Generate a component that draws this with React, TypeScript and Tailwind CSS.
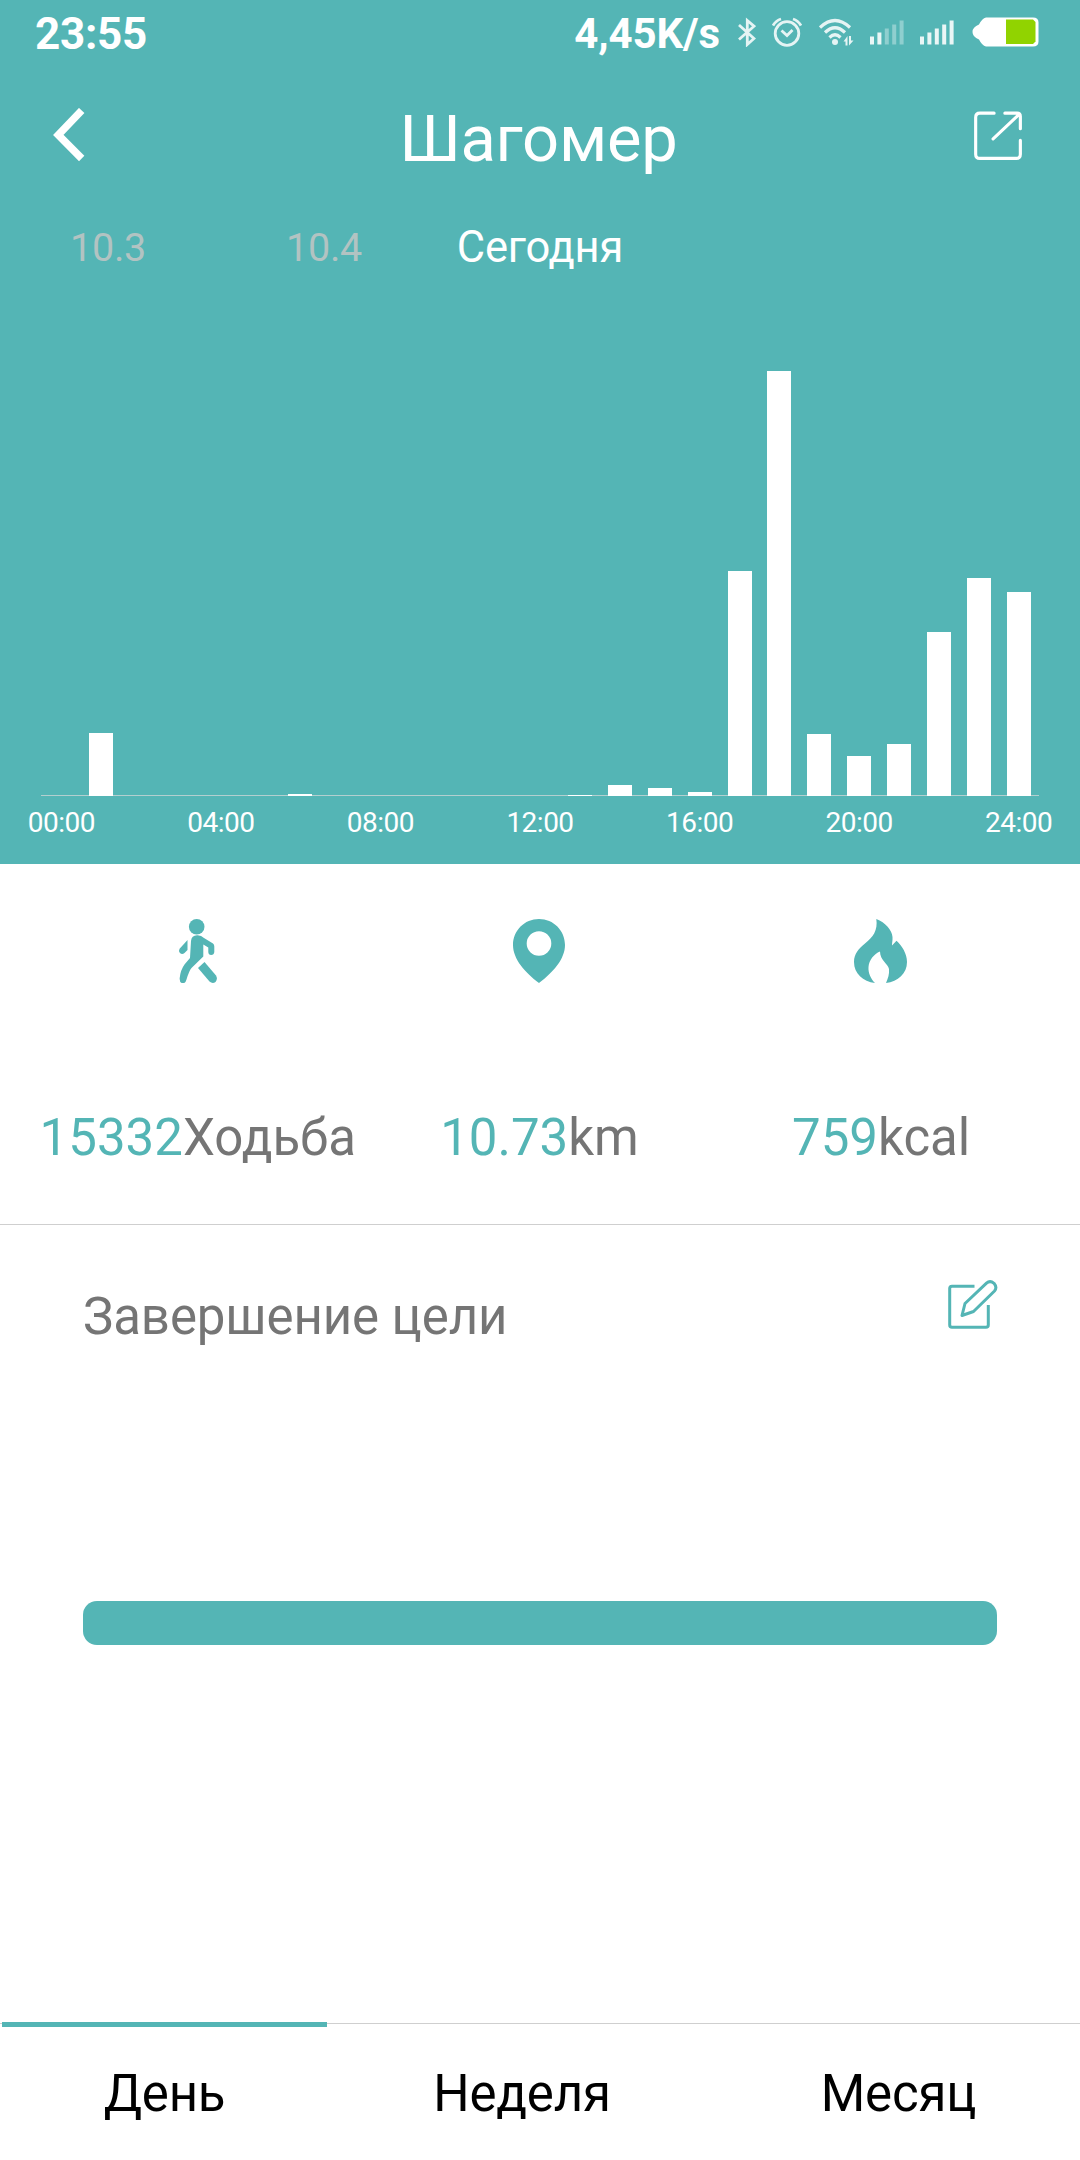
import type { ReactNode } from "react";

const steps = [0, 63, 0, 0, 0, 0, 2, 0, 0, 0, 0, 0, 0, 1, 11, 8, 4, 225, 425, 62, 40, 52, 164, 218, 204];

const hours = ["00:00", "04:00", "08:00", "12:00", "16:00", "20:00", "24:00"];

function Signal({ level }: { level: number }) {
  return (
    <svg width="34" height="30" viewBox="0 0 34 30" fill="#fff">
      {[8, 12, 16, 20, 24].map((h, i) => (
        <rect key={h} x={i * 7.4} y={27.5 - h} width={4} height={h} opacity={i < level ? 0.88 : 0.35} />
      ))}
    </svg>
  );
}

function StatusBar() {
  return (
    <div className="flex h-[68px] items-center pl-[35px] pr-[41px]">
      <span className="text-[44px] font-bold leading-none tracking-[-0.3px]">23:55</span>
      <span className="ml-auto text-[42px] font-bold leading-none tracking-[-0.1px]">4,45K/s</span>
      <div className="mb-1 ml-[18px] flex items-center">
        <svg width="18" height="30" viewBox="0 0 18 30" fill="none" stroke="#fff" strokeOpacity="0.85" strokeWidth="2.8">
          <path d="M1 8 16 21.5 9.3 27.5V3.5L16 9.2 1 22.5" />
        </svg>
        <svg className="ml-4" width="30" height="30" viewBox="0 0 30 30" fill="none" stroke="#fff" strokeOpacity="0.85" strokeWidth="2.8">
          <circle cx="15" cy="16.5" r="11.8" />
          <path d="m9.5 13.5 5.5 5 5.5-5.5M1 8.5Q4 3.5 9 2M29 8.5Q26 3.5 21 2" />
        </svg>
        <svg className="ml-[17px]" width="36" height="30" viewBox="0 0 36 30" fill="none" stroke="#fff" strokeOpacity="0.85">
          <path d="M1 10.5Q16 -3.5 31 10.5M6 15.5Q16 6 26 15.5M10.5 20.5Q16 15 21.5 20.5" strokeWidth="3.2" />
          <circle cx="16" cy="25" r="3" fill="#fff" fillOpacity="0.85" stroke="none" />
          <path d="M28.5 19v9.500h-2V24.500H24.500ZM30 28.500V19h2V23.500H34.500Z" fill="#fff" fillOpacity="0.85" stroke="none" />
        </svg>
        <div className="ml-[15px] flex gap-4">
          <Signal level={2} />
          <Signal level={5} />
        </div>
        <svg className="ml-[18px]" width="67" height="30" viewBox="0 0 67 30">
          <path d="M14 0.5H61Q66.5 0.5 66.5 5.5V24.5Q66.5 29.5 61 29.5H14Q10 28.5 7 22.5Q0.5 20 0.5 15T7 7.5Q10 1.5 14 0.5Z" fill="#fff" />
          <path d="M34 2.5H61L63.5 5V24.5L61 27H34Z" fill="#91d300" />
        </svg>
      </div>
    </div>
  );
}

function TitleBar() {
  return (
    <div className="grid h-[139px] grid-cols-[1fr_auto_1fr] items-center pl-[54px] pr-[57px]">
      <svg className="-ml-px mb-1.5" width="32" height="54" viewBox="0 0 32 54" fill="none" stroke="#fff" strokeWidth="7.5">
        <path d="M28.7 2.5 5.3 27 28.7 50.5" />
      </svg>
      <h1 className="mt-1 text-[65px] leading-none tracking-[-0.2px]">Шагомер</h1>
      <svg className="mb-1 justify-self-end" width="49" height="50" viewBox="0 0 50 50" fill="none" stroke="#fff" strokeWidth="3.2" strokeLinecap="round" strokeLinejoin="round">
        <path d="M20.5 1.7H6Q1.7 1.7 1.7 6V43.5Q1.7 47.8 6 47.8H43Q47.3 47.8 47.3 43.5V29.5M31.5 1.7H44Q47.3 1.7 47.3 5V17.5M46 3 19.5 28" />
      </svg>
    </div>
  );
}

function StepsChart() {
  return (
    <div className="px-[41px]">
      <div className="flex h-[507px] items-end bg-[linear-gradient(to_top,#b3cfcf_1px,transparent_1px)]">
        {steps.map((height, hour) => (
          <div key={hour} className="flex flex-1 items-end pl-[7.9px] pr-[8.1px]">
            <div className="w-full bg-white" style={{ height }} />
          </div>
        ))}
      </div>
      <div className="-mx-[59.5px] grid h-[68px] grid-cols-7 items-start pt-[13px] text-center text-[28px] leading-7 tracking-[-0.5px]">
        {hours.map((hour) => (
          <span key={hour}>{hour}</span>
        ))}
      </div>
    </div>
  );
}

function Stat({ icon, value, unit }: { icon: ReactNode; value: string; unit: string }) {
  return (
    <div className="flex flex-col items-center">
      {icon}
      <p className="mt-[125px] whitespace-nowrap text-[51px] leading-[60px] text-[#757575]">
        <span className="text-[#54b5b5]">{value}</span>
        {unit}
      </p>
    </div>
  );
}

function WalkIcon() {
  return (
    <svg width="38" height="64" viewBox="0 0 38 64" fill="#54b5b5">
      <circle cx="17.7" cy="7.8" r="7.8" />
      <path d="M12 22Q12.5 16.5 18 16.3Q22 16 25 19L34 24.5Q35.3 25.5 35.3 27.5V33Q35 36 32.2 36T29.3 33V28.5L24.3 25.5V37.5L12.5 49Q10 52 7.5 60.5Q6.5 64.5 3.5 64.3Q.3 63.5 .7 59Q1.5 51 5.5 45.5L11 39Z" />
      <path d="M8.5 21V31L5.5 34Q3 36 1 34Q-.8 32 .8 29.5Z" />
      <path d="M25.5 43 37 56.5Q39 60 36.5 63Q33.5 65 30.5 62.5L19 49Z" />
    </svg>
  );
}

function PinIcon() {
  return (
    <svg width="52" height="64" viewBox="0 0 52 64" fill="#54b5b5">
      <path
        fillRule="evenodd"
        d="M26 0C40.5 0 52 11.5 52 26C52 40 40 53.5 26 64C12 53.5 0 40 0 26C0 11.5 11.5 0 26 0ZM26 12.2A12.3 12.3 0 1 0 26 36.8A12.3 12.3 0 1 0 26 12.2Z"
      />
    </svg>
  );
}

function FlameIcon() {
  return (
    <svg width="54" height="64" viewBox="0 0 54 64" fill="#54b5b5">
      <path d="M22.3 0C31.5 3.5 38 11 38.5 18C38.7 21.5 38 24 38 26.5L42.5 21.8C48 27 53 34.5 53 43C53 54.5 44 62.5 32 64C34 59.5 35.5 55 35 50C34 44.5 26 41.5 26 32.5C20 35 15 41 14.5 48C14 54 17 60 21 64C9 62.5 0 54.5 0 43C0 35 4.5 29.5 11 24.5C19 18 24 11.5 22.3 0Z" />
    </svg>
  );
}

function Stats() {
  return (
    <section className="grid h-[361px] grid-cols-3 border-b border-[#cfcfcf] pl-[27px] pr-[28px] pt-[55px]">
      <Stat icon={<WalkIcon />} value="15332" unit="Ходьба" />
      <Stat icon={<PinIcon />} value="10.73" unit="km" />
      <Stat icon={<FlameIcon />} value="759" unit="kcal" />
    </section>
  );
}

function Goal() {
  return (
    <section className="flex-1 px-[83px] pt-[55px]">
      <div className="flex items-start justify-between text-[#757575]">
        <h2 className="pt-[7px] text-[51px] leading-[60px] tracking-[-0.1px]">Завершение цели</h2>
        <svg className="-mr-px" width="50" height="50" viewBox="0 0 50 50" fill="none" stroke="#54b5b5" strokeWidth="3" strokeLinejoin="round">
          <path d="M26.5 6.2H4Q1.7 6.2 1.7 8.5V45Q1.7 47.3 4 47.3H38Q40.3 47.3 40.3 45V25" />
          <path d="M14 35.5 17 23.5 38.5 3.2Q42 0 46 3.3Q49.5 7.5 46.5 11L25.5 31.5Z" />
        </svg>
      </div>
      <div className="mt-[254px] h-11 rounded-[14px] bg-[#54b5b5]" />
    </section>
  );
}

function Tabs() {
  return (
    <nav className="grid h-[138px] grid-cols-[327px_390px_363px] bg-[linear-gradient(to_bottom,transparent_1px,#cfcfcf_1px,#cfcfcf_2px,transparent_2px)] text-center text-[51px] leading-[60px] tracking-[-0.2px] text-black">
      <button className="ml-0.5 border-t-5 border-[#54b5b5]">День</button>
      <button className="pt-[5px]">Неделя</button>
      <button className="pt-[5px]">Месяц</button>
    </nav>
  );
}

export default function App() {
  return (
    <main className="flex h-[2160px] w-[1080px] flex-col bg-white font-['Roboto',sans-serif]">
      <header className="h-[864px] bg-[#54b5b5] text-white">
        <StatusBar />
        <TitleBar />
        <div className="grid h-[82px] grid-cols-5 items-center text-center text-[39.5px] leading-none tracking-[-0.2px] text-[#b2c3c2]">
          <span>10.3</span>
          <span>10.4</span>
          <span className="text-[43.5px] text-white">Сегодня</span>
        </div>
        <StepsChart />
      </header>
      <Stats />
      <Goal />
      <Tabs />
    </main>
  );
}
